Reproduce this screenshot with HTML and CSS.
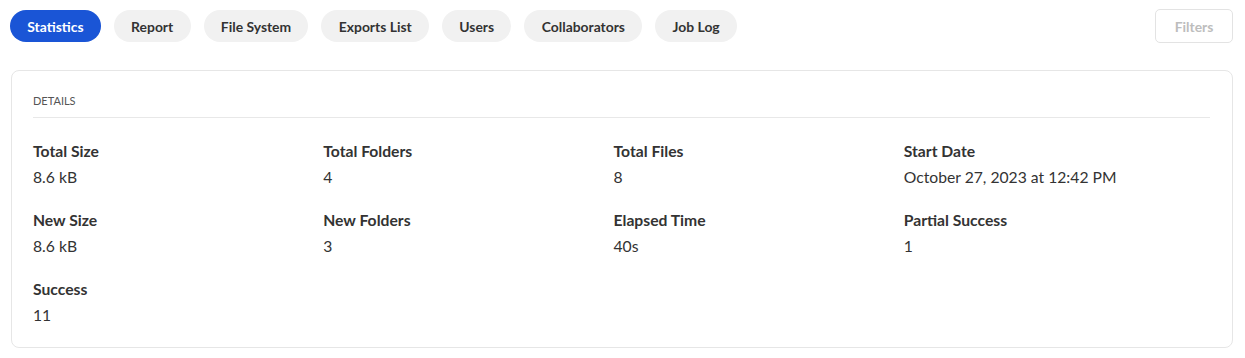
FILE: index.html
```html
<!DOCTYPE html>
<html lang="en">

<head>
  <meta charset="UTF-8">
  <meta name="viewport" content="width=device-width, initial-scale=1.0">
  <title>Job Statistics</title>
  <link rel="stylesheet" href="styles.css">
</head>

<body>
  <div class="toolbar">
    <div class="tabs">
      <button class="tab active">Statistics</button>
      <button class="tab">Report</button>
      <button class="tab">File System</button>
      <button class="tab">Exports List</button>
      <button class="tab">Users</button>
      <button class="tab">Collaborators</button>
      <button class="tab">Job Log</button>
    </div>
    <button class="filters" disabled>Filters</button>
  </div>

  <!-- Details card -->
  <div class="card">
    <div class="card-title">Details</div>
    <div class="stats">
      <div class="stat">
        <div class="stat-label">Total Size</div>
        <div class="stat-value">8.6 kB</div>
      </div>
      <div class="stat">
        <div class="stat-label">Total Folders</div>
        <div class="stat-value">4</div>
      </div>
      <div class="stat">
        <div class="stat-label">Total Files</div>
        <div class="stat-value">8</div>
      </div>
      <div class="stat">
        <div class="stat-label">Start Date</div>
        <div class="stat-value">October 27, 2023 at 12:42 PM</div>
      </div>
      <div class="stat">
        <div class="stat-label">New Size</div>
        <div class="stat-value">8.6 kB</div>
      </div>
      <div class="stat">
        <div class="stat-label">New Folders</div>
        <div class="stat-value">3</div>
      </div>
      <div class="stat">
        <div class="stat-label">Elapsed Time</div>
        <div class="stat-value">40s</div>
      </div>
      <div class="stat">
        <div class="stat-label">Partial Success</div>
        <div class="stat-value">1</div>
      </div>
      <div class="stat">
        <div class="stat-label">Success</div>
        <div class="stat-value">11</div>
      </div>
    </div>
  </div>
</body>

</html>
```

FILE: styles.css
```css
body {
  font-family: 'Lato', 'Liberation Sans', sans-serif;
  margin: 0;
  padding: 9px 12px 0 10px;
  background-color: #ffffff;
  color: #333333;
}

.toolbar {
  display: flex;
  align-items: center;
  height: 34px;
}

.tabs {
  display: flex;
  gap: 13px;
}

.tab {
  height: 32px;
  padding: 0 17.3px;
  border: none;
  border-radius: 16px;
  background-color: #f1f1f1;
  color: #333333;
  font-family: inherit;
  font-size: 13.9px;
  font-weight: bold;
  cursor: pointer;
}

.tab.active {
  background-color: #1a55d6;
  color: #ffffff;
}

.filters {
  margin-left: auto;
  height: 34px;
  width: 78px;
  border: 1px solid #e3e3e3;
  border-radius: 5px;
  background-color: #ffffff;
  color: #bdbdbd;
  font-family: inherit;
  font-size: 13.9px;
  font-weight: bold;
}

.card {
  margin: 27px 0 0 1px;
  padding: 22px 22px 22px 21px;
  border: 1px solid #e6e6e6;
  border-radius: 8px;
}

.card-title {
  font-size: 11px;
  line-height: 16px;
  text-transform: uppercase;
  color: #555555;
  padding-bottom: 8px;
  border-bottom: 1px solid #e8e8e8;
}

.stats {
  display: grid;
  grid-template-columns: repeat(4, 1fr);
  row-gap: 23px;
  margin-top: 23px;
  padding-right: 16px;
}

.stat-label {
  font-size: 15.7px;
  line-height: 20px;
  font-weight: bold;
}

.stat-value {
  margin-top: 6px;
  font-size: 15.7px;
  line-height: 20px;
}
```
